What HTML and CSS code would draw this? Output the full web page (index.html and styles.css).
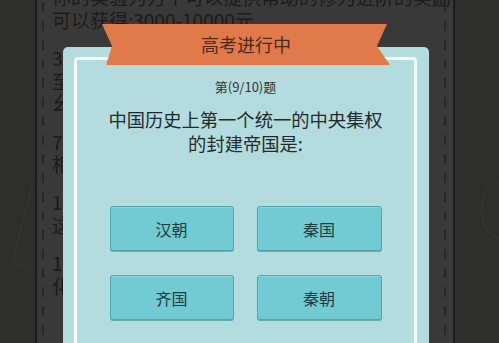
FILE: index.html
```html
<!DOCTYPE html>
<html lang="zh">
<head>
<meta charset="utf-8">
<link rel="stylesheet" href="styles.css">
</head>
<body>
<div class="stage">
  <div class="side side-left">
    <svg class="deco" width="35" height="343" viewBox="0 0 35 343"><path d="M34 180 L22 225 L13 260 L34 275" fill="none" stroke="#3a3a34" stroke-width="1"/></svg>
  </div>
  <div class="panel">
    <div class="bgtext">
      <p><span class="line">你的实验为万个可以提供帮助的修为进阶的奖励+</span><span class="line">可以获得:3000-10000元</span></p>
      <p><span class="line">3.完成高考之后可以获得一定数量的奖励</span><span class="line">至少可以提供给你一个学历证明的资格</span><span class="line">幺是可以在任何时候都可以使用的</span></p>
      <p><span class="line">7.相关的学历可以提高你的工作能力</span><span class="line">相应的收入也会随之提高</span></p>
      <p><span class="line">1.通过高考之后可以进入大学学习</span><span class="line">这样就可以获得更高的学历</span></p>
      <p><span class="line">1.考试期间不能退出游戏</span><span class="line">化学物理生物等科目都有</span></p>
    </div>
  </div>
  <div class="side side-right">
    <svg class="deco" width="44" height="343" viewBox="0 0 44 343"><path d="M44 182 C30 186 26 200 27 215 C28 228 34 236 44 238" fill="none" stroke="#3a3a34" stroke-width="1"/></svg>
  </div>
</div>

<div class="dialog">
  <div class="dialog-inner">
    <div class="qno">第(9/10)题</div>
    <div class="question">中国历史上第一个统一的中央集权<br>的封建帝国是:</div>
    <div class="answers">
      <button class="btn">汉朝</button>
      <button class="btn">秦国</button>
      <button class="btn">齐国</button>
      <button class="btn">秦朝</button>
    </div>
  </div>
</div>
<div class="ribbon">高考进行中</div>
</body>
</html>
```

FILE: styles.css
```css
* { box-sizing: border-box; }
html, body {
  margin: 0;
  padding: 0;
  width: 499px;
  height: 343px;
  overflow: hidden;
  background: #2e2e2a;
  font-family: "Noto Sans CJK SC", "Noto Sans", sans-serif;
}
.stage {
  display: flex;
  height: 343px;
}
.side {
  background: #2e2e2a;
  height: 343px;
}
.deco { display: block; }
.side-left { width: 35px; }
.side-right { flex: 1; }
.panel {
  width: 420px;
  height: 343px;
  overflow: hidden;
  background-color: #393939;
  border-left: 2px solid #1c1c1c;
  border-right: 2px solid #1c1c1c;
  background-image:
    linear-gradient(#262626 0 10px, transparent 10px),
    linear-gradient(#262626 0 10px, transparent 10px);
  background-size: 2px 19px, 2px 19px;
  background-position: 5px 2px, 407px 2px;
  background-repeat: repeat-y;
  padding-left: 15px;
}
.bgtext {
  margin-top: -14px;
  color: #1b1b1b;
  font-size: 19px;
  line-height: 22.7px;
}
.bgtext p {
  margin: 0 0 15.5px 0;
}
.line {
  display: block;
  white-space: nowrap;
}

.dialog {
  position: absolute;
  left: 63px;
  top: 47px;
  width: 366px;
  height: 296px;
  background: #b4dcdf;
  border-radius: 5px 5px 0 0;
  padding: 10px 12px 0 11px;
}
.dialog-inner {
  height: 100%;
  border: 3px solid #f4fbfb;
  border-bottom: none;
  border-radius: 4px 4px 0 0;
  background: #b4dcdf;
  display: flex;
  flex-direction: column;
  align-items: center;
}
.qno {
  margin-top: 18px;
  font-size: 13px;
  line-height: 18px;
  color: #333;
}
.question {
  margin-top: 11px;
  font-size: 18.3px;
  line-height: 24px;
  color: #1e2a2b;
  text-align: center;
}
.answers {
  margin-top: 51px;
  display: grid;
  grid-template-columns: 124px 125px;
  grid-auto-rows: 45px;
  column-gap: 23px;
  row-gap: 24px;
}
.btn {
  font-family: "Noto Sans CJK SC", "Noto Sans", sans-serif;
  font-size: 16px;
  color: #1d3a3e;
  background: #72cbd3;
  border: 1px solid #55a3ab;
  border-radius: 3px;
  box-shadow: 0 1px 0 #6aa9af, inset 0 1px 0 #8ad7de;
  padding: 0;
}
.ribbon {
  position: absolute;
  left: 101px;
  top: 24px;
  width: 290px;
  height: 41px;
  background: #e17a4b;
  clip-path: polygon(1px 0, 286px 0, 276px 22px, 289px 41px, 5px 41px, 11px 22px);
  color: #4a2a1e;
  font-size: 18px;
  line-height: 41px;
  text-align: center;
}
```
